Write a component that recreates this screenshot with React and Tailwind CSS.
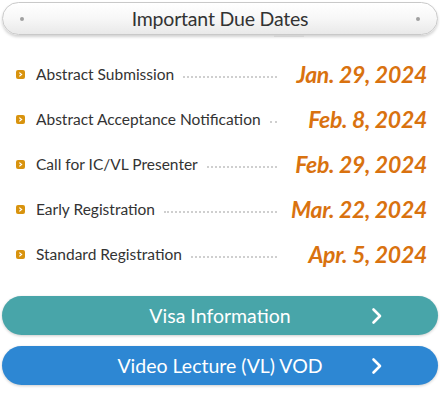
import React from 'react';

const dates = [
    { label: 'Abstract Submission', date: 'Jan. 29, 2024' },
    { label: 'Abstract Acceptance Notification', date: 'Feb. 8, 2024' },
    { label: 'Call for IC/VL Presenter', date: 'Feb. 29, 2024' },
    { label: 'Early Registration', date: 'Mar. 22, 2024' },
    { label: 'Standard Registration', date: 'Apr. 5, 2024' },
];

const Chevron = () => (
    <svg width="12" height="18" viewBox="0 0 12 18" fill="none">
        <path d="M2.5 2.5 L9 9 L2.5 15.5" stroke="white" strokeWidth="2.6" strokeLinecap="round" strokeLinejoin="round" />
    </svg>
);

const Bullet = () => (
    <span className="w-[9px] h-[9px] rounded-[2px] bg-[#d8930e] flex items-center justify-center shrink-0">
        <svg width="5" height="5" viewBox="0 0 5 5" fill="none">
            <path d="M1.3 0.6 L3.6 2.5 L1.3 4.4" stroke="white" strokeWidth="1.2" />
        </svg>
    </span>
);

const App = () => {
    return (
        <div className="w-[440px] h-[402px] bg-white font-['Lato',sans-serif] overflow-hidden">
            {/* Header pill */}
            <div className="px-[2px] pt-[2px]">
                <div className="h-[33px] rounded-full border border-[#c9c9c9] bg-gradient-to-b from-white via-[#f7f7f7] to-[#e9e9e9] shadow-[0_2px_3px_rgba(0,0,0,0.18)] flex items-center justify-between px-[17px]">
                    <span className="w-[4px] h-[4px] rounded-full bg-[#a0a0a0]"></span>
                    <h2 className="text-[19.5px] text-[#333] tracking-[-0.2px]">Important Due Dates</h2>
                    <span className="w-[4px] h-[4px] rounded-full bg-[#a0a0a0]"></span>
                </div>
                <div className="ml-[272px] w-[30px] h-[2px] bg-[#d4d4d4]"></div>
            </div>

            {/* Dates list */}
            <ul className="mt-[15px]">
                {dates.map((d, i) => (
                    <li key={i} className="h-[45px] flex items-center pl-[16px] pr-[13px]">
                        <Bullet />
                        <span className="ml-[11px] text-[15.5px] text-[#333] whitespace-nowrap">{d.label}</span>
                        <span className="flex-1 ml-[9px] mr-[12px] mt-[4px] border-b-2 border-dotted border-[#cfcfcf]"></span>
                        <span className="w-[138px] text-right text-[23px] font-bold italic text-[#d9720f] tracking-[-0.3px] whitespace-nowrap">{d.date}</span>
                    </li>
                ))}
            </ul>

            {/* Buttons */}
            <div className="px-[2px] mt-[19px] flex flex-col gap-[11px]">
                <a href="#" className="h-[39px] rounded-full bg-[#48a5a9] shadow-[0_1px_3px_rgba(0,0,0,0.2)] grid grid-cols-[1fr_auto_1fr] items-center text-white text-[19.5px]">
                    <span></span>
                    <span>Visa Information</span>
                    <span className="flex justify-end pr-[55px]"><Chevron /></span>
                </a>
                <a href="#" className="h-[39px] rounded-full bg-[#2d87d3] shadow-[0_1px_3px_rgba(0,0,0,0.2)] grid grid-cols-[1fr_auto_1fr] items-center text-white text-[19.5px]">
                    <span></span>
                    <span>Video Lecture (VL) VOD</span>
                    <span className="flex justify-end pr-[55px]"><Chevron /></span>
                </a>
            </div>
        </div>
    );
};

export default App;
